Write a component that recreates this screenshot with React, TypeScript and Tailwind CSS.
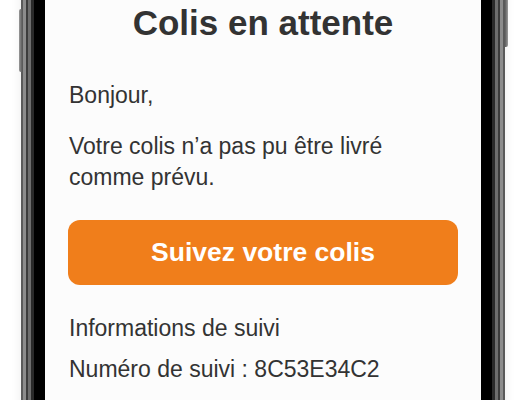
const font = { fontFamily: '"Liberation Sans", Arial, sans-serif' };

function SideButton({ side, top, height }: { side: 'left' | 'right'; top: number; height: number }) {
    return (
        <div
            className={
                side === 'left'
                    ? 'absolute left-[-2px] w-[3px] rounded-l-[2px] bg-gradient-to-r from-[#9a9a9a] to-[#5c5c5c]'
                    : 'absolute right-[-3px] w-[3px] rounded-r-[2px] bg-gradient-to-r from-[#5c5c5c] to-[#9a9a9a]'
            }
            style={{ top, height }}
        />
    );
}

export default function App() {
    return (
        <div className="w-[526px] h-[400px] overflow-hidden bg-white" style={font}>
            <div className="relative ml-[21px] mt-[-100px] w-[484px] h-[620px] rounded-[64px] bg-[#5a5a5a] p-[2px] shadow-[0_0_12px_rgba(0,0,0,0.08)]">
                <SideButton side="left" top={109} height={63} />
                <SideButton side="right" top={60} height={87} />
                <div className="h-full rounded-[62px] bg-[#8c8c8c] p-[3px]">
                    <div className="h-full rounded-[59px] bg-[#3c3c3c] p-[2px]">
                        <div className="h-full rounded-[57px] bg-[#6e6e6e] p-[3px]">
                            <div className="h-full rounded-[54px] bg-[#2a2a2a] p-[3px]">
                                <div className="h-full rounded-[51px] bg-black p-[11px]">
                                    <div className="h-full rounded-[42px] bg-[#fcfcfc] px-[23px] pt-[79px] text-[#333333]">
                                        <h1 className="text-center text-[35px] leading-[40px] font-bold text-[#333333]">
                                            Colis en attente
                                        </h1>
                                        <p className="mt-[37px] pl-px text-[23px] leading-[31px]">Bonjour,</p>
                                        <p className="mt-[20px] pl-px text-[23px] leading-[31px]">
                                            Votre colis n’a pas pu être livré
                                            <br />
                                            comme prévu.
                                        </p>
                                        <button className="mt-[27px] flex h-[65px] w-full items-center justify-center rounded-[12px] bg-[#f07e1b] text-[26.5px] font-bold text-white">
                                            Suivez votre colis
                                        </button>
                                        <p className="mt-[28px] pl-px text-[23px] leading-[31px]">Informations de suivi</p>
                                        <p className="mt-[10px] pl-px text-[23px] leading-[31px]">
                                            Numéro de suivi : 8C53E34C2
                                        </p>
                                    </div>
                                </div>
                            </div>
                        </div>
                    </div>
                </div>
            </div>
        </div>
    );
}
